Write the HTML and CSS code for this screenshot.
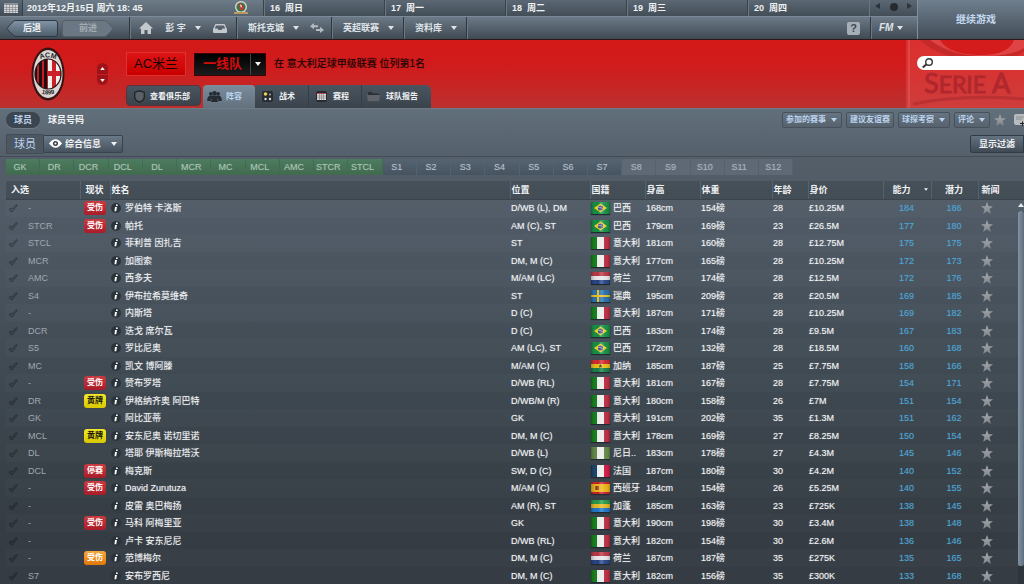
FILE: index.html
```html
<!DOCTYPE html>
<html lang="zh-CN">
<head>
<meta charset="utf-8">
<meta name="viewport" content="width=device-width, initial-scale=1">
<title>AC米兰 - 阵容</title>
<link rel="stylesheet" href="styles.css">
</head>
<body>
<svg class="defs" aria-hidden="true">
  <defs>
    <linearGradient id="gloss" x1="0" x2="1" y1="0" y2="0">
      <stop offset="0" stop-color="#000" stop-opacity=".25"/>
      <stop offset=".35" stop-color="#fff" stop-opacity="0"/>
      <stop offset=".55" stop-color="#fff" stop-opacity=".25"/>
      <stop offset=".75" stop-color="#fff" stop-opacity=".05"/>
      <stop offset="1" stop-color="#000" stop-opacity=".2"/>
    </linearGradient>
    <linearGradient id="star-fill" x1="0" x2="0" y1="0" y2="1">
      <stop offset="0" stop-color="#a8acb0"/><stop offset="1" stop-color="#80858a"/>
    </linearGradient>
  </defs>
  <symbol id="caret" viewBox="0 0 6 4"><path d="M0 0h6L3 4z" fill="currentColor"/></symbol>
  <symbol id="star" viewBox="0 0 12 12"><path d="M6 0l1.500 4.200 4.500.1-3.500 2.800L9.900 12 6 9.300 2.100 12l1.400-4.900L0 4.300l4.500-.1z" fill="url(#star-fill)"/></symbol>
  <symbol id="tick" viewBox="0 0 10 10"><path d="M1 6.200l2-1.200 1.200 1.100L8 1.400l1.300 1L4.400 8.800H3z" fill="#000" fill-opacity=".12" stroke="#000" stroke-opacity=".32" stroke-width=".8"/></symbol>
  <symbol id="info" viewBox="0 0 10 10"><circle cx="5" cy="5" r="5" fill="#2c343b"/><circle cx="5.900" cy="2.200" r=".9" fill="#fff"/><path d="M4 4h2L5.200 8.300H3.500z" fill="#fff"/></symbol>
  <symbol id="flag-it" viewBox="0 0 19 12"><path fill="#0b7a12" d="M0 0h7v12H0z"/><path fill="#e9e9e9" d="M6 0h7v12H6z"/><path fill="#b9253a" d="M13 0h6v12h-6z"/><path fill="url(#gloss)" d="M0 0h19v12H0z"/></symbol>
  <symbol id="flag-fr" viewBox="0 0 19 12"><path fill="#123a63" d="M0 0h7v12H0z"/><path fill="#e9e9e9" d="M6 0h7v12H6z"/><path fill="#d01040" d="M13 0h6v12h-6z"/><path fill="url(#gloss)" d="M0 0h19v12H0z"/></symbol>
  <symbol id="flag-ng" viewBox="0 0 19 12"><path fill="#5d8440" d="M0 0h19v12H0z"/><path fill="#e9e9e9" d="M6 0h7v12H6z"/><path fill="url(#gloss)" d="M0 0h19v12H0z"/></symbol>
  <symbol id="flag-nl" viewBox="0 0 19 12"><path fill="#b5303c" d="M0 0h19v4H0z"/><path fill="#e4e4e8" d="M0 4h19v4H0z"/><path fill="#1e3c80" d="M0 8h19v4H0z"/><path fill="url(#gloss)" d="M0 0h19v12H0z"/></symbol>
  <symbol id="flag-ga" viewBox="0 0 19 12"><path fill="#1e9440" d="M0 0h19v4H0z"/><path fill="#e3b420" d="M0 4h19v4H0z"/><path fill="#1670c4" d="M0 8h19v4H0z"/><path fill="url(#gloss)" d="M0 0h19v12H0z"/></symbol>
  <symbol id="flag-gh" viewBox="0 0 19 12"><path fill="#cc2028" d="M0 0h19v4H0z"/><path fill="#e8bc10" d="M0 4h19v4H0z"/><path fill="#107a40" d="M0 8h19v4H0z"/><path fill="#222" d="M9.500 4l.6 1.400h1.400l-1 .9.400 1.500-1.400-.8-1.400.8.400-1.500-1-.9h1.400z"/><path fill="url(#gloss)" d="M0 0h19v12H0z"/></symbol>
  <symbol id="flag-es" viewBox="0 0 19 12"><path fill="#c01824" d="M0 0h19v12H0z"/><path fill="#ecae10" d="M0 2h19v8H0z"/><path fill="#9a5a28" d="M4 4h4v4H4z"/><path fill="#6e3830" d="M5 4h1v4H5z"/><path fill="url(#gloss)" d="M0 0h19v12H0z"/></symbol>
  <symbol id="flag-se" viewBox="0 0 19 12"><path fill="#1f6aa8" d="M0 0h19v12H0z"/><path fill="#e8bc20" d="M6 0h2v5h11v2H8v5H6V7H0V5h6z"/><path fill="url(#gloss)" d="M0 0h19v12H0z"/></symbol>
  <symbol id="flag-br" viewBox="0 0 19 12"><path fill="#0d8a3c" d="M0 0h19v12H0z"/><path fill="#ecd020" d="M9.500 1.500L16 6l-6.500 4.500L3 6z"/><circle cx="9.500" cy="6" r="2.600" fill="#33408c"/><path d="M7 5.400q2.600-.4 4.800 1.300" stroke="#c8d0e0" stroke-width=".6" fill="none"/><path fill="url(#gloss)" d="M0 0h19v12H0z"/></symbol>
</svg>

<header class="topbar">
  <div class="topbar-main">
    <div class="days">
      <button class="cal" aria-label="日历"><svg viewBox="0 0 14 10" width="14" height="10"><path fill="#d4d6d8" d="M0 0h14v10H0z"/><path fill="#8a9096" d="M0 0h14v2H0z"/><path stroke="#7a8086" d="M0 4.500h14M0 6.500h14M0 8.500h14M2.500 2v8M5.500 2v8M8.500 2v8M11.500 2v8" stroke-width=".6"/></svg></button>
      <div class="today"><time>2012年12月15日 周六 18: 45</time>
        <svg class="mini-crest" viewBox="0 0 14 14" width="14" height="14"><circle cx="7" cy="6" r="6" fill="#d5d8d2"/><circle cx="7" cy="6" r="4.600" fill="#2d7a4c"/><path d="M5 2l3 1 2 3-1 3-3 0-1-3z" fill="#c2392f"/><path d="M6 3l2 2-1 2z" fill="#fff"/><path d="M0 11h14v2H0z" fill="#b79a5c"/></svg></div>
      <div class="day">16 &nbsp;周日</div>
      <div class="day">17 &nbsp;周一</div>
      <div class="day">18 &nbsp;周二</div>
      <div class="day">19 &nbsp;周三</div>
      <div class="day">20 &nbsp;周四</div>
      <div class="pager">
        <button aria-label="前一天"><svg viewBox="0 0 5 6" width="5" height="6"><path d="M5 0v6L0 3z" fill="#2c333a"/></svg></button>
        <button aria-label="今天"><svg viewBox="0 0 8 8" width="8" height="8"><circle cx="4" cy="4" r="4" fill="#262b30"/></svg></button>
        <button aria-label="后一天"><svg viewBox="0 0 5 6" width="5" height="6"><path d="M0 0v6l5-3z" fill="#2c333a"/></svg></button>
      </div>
    </div>
    <nav class="menubar" aria-label="主菜单">
      <div class="history">
        <button class="history-btn"><svg viewBox="0 0 52 17" width="52" height="17"><defs><linearGradient id="bk" x1="0" x2="0" y1="0" y2="1"><stop offset="0" stop-color="#8195a7"/><stop offset="1" stop-color="#4d5c6a"/></linearGradient></defs><path d="M9 .5h40q2.500 0 2.500 2.500v11q0 2.500-2.500 2.500H9Q7 16 1 8.500 7 1 9 .5z" fill="url(#bk)" stroke="#2f3943"/></svg><span>后退</span></button>
        <button class="history-btn history-next" disabled><svg viewBox="0 0 52 17" width="52" height="17"><path d="M43 .5H3Q.5.500.5 3v11q0 2.500 2.500 2.500h40q2-.5 8-8-6-7.500-8-8z" fill="#6b7782" stroke="#56616c"/></svg><span>前进</span></button>
      </div>
      <div class="menu menu-user">
        <button aria-label="主页"><svg viewBox="0 0 14 12" width="14" height="12"><path d="M7 0l7 6.500h-2V12H8.500V8h-3v4H2V6.500H0z" fill="#c3c8cd"/></svg></button>
        <button>彭 宇 <svg class="caret"><use href="#caret"/></svg></button>
        <button aria-label="收件箱"><svg viewBox="0 0 14 9" width="14" height="9"><path d="M2.500 0h9L14 5v3q0 1-1 1H1Q0 9 0 8V5z" fill="#c3c8cd"/><path d="M3.200 1.400h7.600l1.500 3.200H9.500l-1 1.400h-3l-1-1.400H1.700z" fill="#55616c"/></svg></button>
      </div>
      <div class="menu menu-club">
        <button>斯托克城 <svg class="caret"><use href="#caret"/></svg></button>
        <button aria-label="切换"><svg viewBox="0 0 14 10" width="14" height="10"><path d="M4 0v2.200h4v2H4v2L0 3.200zM10 3.800V6H6v2h4v2l4-3z" fill="#b4bac0"/></svg></button>
      </div>
      <div class="menu menu-mid"><button>英超联赛 <svg class="caret"><use href="#caret"/></svg></button></div>
      <div class="menu menu-mid"><button>资料库 <svg class="caret"><use href="#caret"/></svg></button></div>
      <div class="menu menu-fill"><button class="help" aria-label="帮助">?</button></div>
      <div class="menu menu-fm"><button class="fm">FM <svg class="caret"><use href="#caret"/></svg></button></div>
    </nav>
  </div>
  <button class="continue">继续游戏</button>
</header>

<section class="banner">
  <div class="badge-area">
    <svg class="crest" viewBox="0 0 34 54" width="34" height="54" role="img" aria-label="AC米兰队徽">
      <defs><clipPath id="inner"><ellipse cx="17" cy="27" rx="13" ry="15"/></clipPath></defs>
      <ellipse cx="17" cy="27" rx="16.500" ry="26.500" fill="#3a1214"/>
      <ellipse cx="17" cy="27" rx="14.500" ry="24" fill="#d9d6d4"/>
      <g clip-path="url(#inner)">
        <path fill="#c81c24" d="M2 9h30v36H2z"/>
        <path fill="#171113" d="M3 9h3v36H3zM8 9h3v36H8zM13 9h3v36h-3z"/>
        <path fill="#f1eeec" d="M17 9h15v36H17z"/>
        <path fill="#cc2028" d="M21 9h4v36h-4zM17 24h15v5H17z"/>
      </g>
      <ellipse cx="17" cy="27" rx="13" ry="15" fill="none" stroke="#241416" stroke-width="1.200"/>
      <path id="arc-top" d="M6 14Q17 7 28 14" fill="none"/>
      <path id="arc-low" d="M6 45Q17 50 28 45" fill="none"/>
      <text class="crest-text"><textPath href="#arc-top" startOffset="50%" text-anchor="middle">ACM</textPath></text>
      <text class="crest-year"><textPath href="#arc-low" startOffset="50%" text-anchor="middle">1899</textPath></text>
    </svg>
    <div class="stepper">
      <button aria-label="上一队"><svg viewBox="0 0 6 4" width="5" height="3"><path d="M0 4h6L3 0z" fill="#fff"/></svg></button>
      <button aria-label="下一队"><svg viewBox="0 0 6 4" width="5" height="3"><path d="M0 0h6L3 4z" fill="#fff"/></svg></button>
    </div>
  </div>
  <div class="banner-main">
    <div class="title-row">
      <h1 class="club">AC米兰</h1>
      <div class="squad"><button class="squad-name">一线队</button><button class="squad-more" aria-label="选择球队"><svg class="caret"><use href="#caret"/></svg></button></div>
      <p class="standing">在 意大利足球甲级联赛 位列第1名</p>
    </div>
    <nav class="tabs" aria-label="俱乐部">
      <a class="tab tab-club" href="#club"><svg viewBox="0 0 12 14" width="11" height="13"><path d="M6 0l6 2v5q0 5-6 7Q0 12 0 7V2z" fill="#20252a"/><path d="M6 1.500l4.500 1.400V7q0 3.800-4.500 5.300Q1.500 10.800 1.500 7V2.900z" fill="#5a6066"/></svg>查看俱乐部</a>
      <a class="tab tab-on" href="#squad" aria-current="page"><svg viewBox="0 0 16 12" width="15" height="11"><circle cx="4" cy="3" r="2" fill="#262c33"/><circle cx="12" cy="3" r="2" fill="#262c33"/><circle cx="8" cy="2.500" r="2.500" fill="#262c33"/><path d="M0 11q0-5 3-6h10q3 1 3 6h-4l-.5 1h-7L4 11z" fill="#262c33"/><path d="M4.500 11V8M11.500 11V8" stroke="#566470" stroke-width=".8"/></svg>阵容</a>
      <div class="tab-group">
        <a class="tab" href="#tactics"><svg viewBox="0 0 11 11" width="11" height="11"><rect width="11" height="11" rx="2" fill="#272c31"/><circle cx="3.500" cy="3" r="1.800" fill="#e8d44a"/><circle cx="8" cy="3.500" r="1" fill="#aaa"/><circle cx="3.500" cy="8" r="1.200" fill="#ddd"/><circle cx="8" cy="8" r="1.200" fill="#ddd"/></svg>战术</a>
        <a class="tab" href="#schedule"><svg viewBox="0 0 11 11" width="11" height="11"><rect width="11" height="11" rx="2" fill="#272c31"/><path fill="#e2dcdc" d="M1 3h9v6H1z"/><path fill="#b04a50" d="M1 2h9v1H1z"/><path stroke="#666" stroke-width=".5" d="M3.500 3v6M5.500 3v6M7.500 3v6M1 5h9M1 7h9"/></svg>赛程</a>
        <a class="tab tab-report" href="#report"><svg viewBox="0 0 13 11" width="13" height="11"><path d="M1 1h4l1 1.500h6V11H1z" fill="#2a3036"/><path d="M0 4h13l-1 6.500H1z" fill="#5e646a"/></svg>球队报告</a>
      </div>
    </nav>
  </div>
  <div class="league">
    <svg class="league-art" viewBox="0 0 118 68" preserveAspectRatio="none" aria-hidden="true"><path d="M0 0h118v68H0z" fill="#e04a48" opacity=".5"/><path d="M2 0h2v68H2z" fill="#e88" opacity=".25"/><path d="M14 0q20 19 58 20t46-9V0z" fill="#b82424" opacity=".6"/><path d="M24 0q20 15 50 16t44-8V0z" fill="#df4343"/><path d="M34 0q8 14 38 15t36-15z" fill="#d41c1c"/><path d="M7 64q50-10 111-5" stroke="#b22c30" stroke-width="3" fill="none" opacity=".7"/></svg>
    <label class="search"><svg viewBox="0 0 11 10" width="11" height="10"><circle cx="7" cy="4" r="3.300" fill="none" stroke="#333" stroke-width="1.400"/><path d="M4.500 6.300L.8 9.500" stroke="#333" stroke-width="2"/></svg><input type="search" aria-label="搜索"></label>
    <div class="serie"><big>S</big>ERIE<big> A</big></div>
  </div>
</section>

<main class="page">
  <div class="subnav">
    <a class="pill" href="#players">球员</a>
    <a class="sublink" href="#numbers">球员号码</a>
    <div class="actions">
      <button class="action">参加的赛事 <svg class="caret"><use href="#caret"/></svg></button>
      <button class="action">建议友谊赛</button>
      <button class="action">球探考察 <svg class="caret"><use href="#caret"/></svg></button>
      <button class="action">评论 <svg class="caret"><use href="#caret"/></svg></button>
      <button class="icon-btn" aria-label="收藏"><svg width="12" height="12"><use href="#star"/></svg></button>
      <button class="icon-btn icon-note" aria-label="便笺"><svg viewBox="0 0 10 12" width="10" height="12"><path d="M2 0h8v11H2Q0 11 0 9V2Q0 0 2 0z" fill="#b9bcbf"/><path d="M2 3h8M2 5h6" stroke="#8a8e92"/><path d="M6 9.500h4M8.500 7.500V12" stroke="#222"/></svg></button>
    </div>
  </div>
  <div class="viewbar">
    <h2 class="view-title">球员</h2>
    <div class="view-select">
      <svg viewBox="0 0 14 9" width="13" height="9"><path d="M0 4.500Q7-4.500 14 4.500 7 13.500 0 4.500z" fill="#fff"/><circle cx="7" cy="4.500" r="2.700" fill="#39434d"/><circle cx="7" cy="4.500" r="1.100" fill="#fff"/></svg>
      <select aria-label="视图"><option>综合信息</option></select>
      <svg class="caret"><use href="#caret"/></svg>
    </div>
    <button class="filter">显示过滤</button>
  </div>
  <div class="slots" id="slots"></div>
  <div class="roster">
    <table class="players">
      <colgroup><col class="c-pick"><col class="c-status"><col class="c-name"><col class="c-pos"><col class="c-nat"><col class="c-h"><col class="c-w"><col class="c-age"><col class="c-val"><col class="c-ca"><col class="c-pa"><col class="c-news"></colgroup>
      <thead><tr><th>入选</th><th>现状</th><th>姓名</th><th>位置</th><th>国籍</th><th>身高</th><th>体重</th><th>年龄</th><th>身价</th><th class="ability sorted">能力<svg class="caret"><use href="#caret"/></svg></th><th class="ability">潜力</th><th class="news">新闻</th></tr></thead>
      <tbody id="rows"></tbody>
    </table>
    <div class="scroll" aria-hidden="true"><svg viewBox="0 0 6 4" width="6" height="4"><path d="M0 4h6L3 0z" fill="#e8eaec"/></svg><div class="scroll-track"><div class="scroll-thumb"></div></div></div>
  </div>
</main>
<script src="app.js"></script>
</body>
</html>
```
FILE: app.js
```js
const slots = {
  first: 'GK DR DCR DCL DL MCR MC MCL AMC STCR STCL',
  bench: 'S1 S2 S3 S4 S5 S6 S7',
  spare: 'S8 S9 S10 S11 S12'
};

document.getElementById('slots').innerHTML = Object.entries(slots)
  .flatMap(([kind, names]) => names.split(' ').map(n => `<button class="slot slot-${kind}">${n}</button>`))
  .join('');

// status code -> [label, badge colour]
const statuses = {
  inj: ['受伤', 'red'],
  light: ['受伤', 'orange'],
  ban: ['停赛', 'red'],
  card: ['黄牌', 'yellow']
};

// pick | status | name | position | flag | nation | height | weight | age | value | ability | potential
const players = `-|inj|罗伯特 卡洛斯|D/WB (L), DM|br|巴西|168|154|28|£10.25M|184|186
STCR|inj|帕托|AM (C), ST|br|巴西|179|169|23|£26.5M|177|180
STCL||菲利普 因扎吉|ST|it|意大利|181|160|28|£12.75M|175|175
MCR||加图索|DM, M (C)|it|意大利|177|165|28|£10.25M|172|173
AMC||西多夫|M/AM (LC)|nl|荷兰|177|174|28|£12.5M|172|176
S4||伊布拉希莫维奇|ST|se|瑞典|195|209|28|£20.5M|169|185
-||内斯塔|D (C)|it|意大利|187|171|28|£10.25M|169|182
DCR||迭戈 席尔瓦|D (C)|br|巴西|183|174|28|£9.5M|167|183
S5||罗比尼奥|AM (LC), ST|br|巴西|172|132|28|£18.5M|160|168
MC||凯文 博阿滕|M/AM (C)|gh|加纳|185|187|25|£7.75M|158|166
-|inj|赞布罗塔|D/WB (RL)|it|意大利|181|167|28|£7.75M|154|171
DR|card|伊格纳齐奥 阿巴特|D/WB/M (R)|it|意大利|180|158|26|£7M|151|154
GK||阿比亚蒂|GK|it|意大利|191|202|35|£1.3M|151|162
MCL|card|安东尼奥 诺切里诺|DM, M (C)|it|意大利|178|169|27|£8.25M|150|154
DL||塔耶 伊斯梅拉塔沃|D/WB (L)|ng|尼日..|183|178|27|£4.3M|145|146
DCL|ban|梅克斯|SW, D (C)|fr|法国|187|180|30|£4.2M|140|152
-|inj|David Zurutuza|M/AM (C)|es|西班牙|184|154|26|£5.25M|140|155
-||皮雷 奥巴梅扬|AM (R), ST|ga|加蓬|185|163|23|£725K|138|145
-|inj|马科 阿梅里亚|GK|it|意大利|190|198|30|£3.4M|138|148
-||卢卡 安东尼尼|D/WB (RL)|it|意大利|182|154|30|£2.6M|136|146
-|light|范博梅尔|DM, M (C)|nl|荷兰|187|187|35|£275K|135|165
S7||安布罗西尼|DM, M (C)|it|意大利|182|156|35|£300K|133|168`;

document.getElementById('rows').innerHTML = players.split('\n').map(line => {
  const [pick, status, name, pos, flag, nation, h, w, age, value, ca, pa] = line.split('|');
  const [label, colour] = statuses[status] || [];
  const badge = label ? `<span class="status status-${colour}">${label}</span>` : '';
  return `<tr>
    <td class="pick"><span class="cell"><svg width="10" height="10"><use href="#tick"/></svg>${pick}</span></td>
    <td class="state">${badge}</td>
    <td><span class="cell cell-name"><svg width="10" height="10"><use href="#info"/></svg>${name}</span></td>
    <td>${pos}</td>
    <td><span class="cell cell-nation"><svg class="flag" width="19" height="12"><use href="#flag-${flag}"/></svg>${nation}</span></td>
    <td>${h}cm</td><td>${w}磅</td><td>${age}</td><td>${value}</td>
    <td class="ability">${ca}</td><td class="ability">${pa}</td>
    <td class="news"><svg width="12" height="12"><use href="#star"/></svg></td>
  </tr>`;
}).join('');
```
FILE: styles.css
```css
* { box-sizing: border-box; }
html { height: 100%; background: #343b42; }
body {
  margin: 0;
  min-height: 100%;
  font: 9px/12px "Liberation Sans", "Noto Sans CJK SC", sans-serif;
  color: #f0f2f4;
  overflow: hidden;
}
button, input, select { font: inherit; color: inherit; border: 0; padding: 0; margin: 0; background: none; }
a { color: inherit; text-decoration: none; }
h1, h2, p { margin: 0; font-weight: 400; }
svg { display: block; flex: none; }
.defs { position: absolute; width: 0; height: 0; }
.caret { width: 6px; height: 4px; }

/* Top bar */
.topbar { display: flex; height: 40px; border-bottom: 1px solid #30161a; }
.topbar-main { flex: 1; display: flex; flex-direction: column; }
.days { display: flex; height: 16px; background: linear-gradient(#5b6874, #424d57); font-weight: 700; }
.cal { width: 23px; display: flex; align-items: center; justify-content: center; border-right: 1px solid #35404a; }
.today {
  width: 241px; padding: 0 16px 0 4px;
  display: flex; align-items: center; justify-content: space-between;
  background: linear-gradient(#6d7b88, #56636f);
}
.day { flex: 1; padding-left: 5px; line-height: 16px; border-left: 1px solid #6a7682; box-shadow: -1px 0 #39434c; }
.pager { width: 48px; display: flex; align-items: flex-start; justify-content: space-between; padding: 3px 5px 0; border-left: 1px solid #6a7682; }
.menubar { flex: 1; display: flex; background: linear-gradient(#6c7a87, #3f4952); border-top: 1px solid #7b8998; }
.history { width: 129px; display: flex; align-items: center; gap: 4px; padding-left: 6px; }
.history-btn { display: grid; align-items: center; justify-items: center; font-weight: 700; }
.history-btn > * { grid-area: 1 / 1; }
.history-next { color: #a3acb5; }
.menu { display: flex; align-items: center; border-left: 1px solid #2e3740; box-shadow: inset 1px 0 #6c7986; font-weight: 700; color: #dfe3e7; }
.menu button { display: flex; align-items: center; gap: 9px; }
.menu-user { width: 107px; padding: 0 9px; justify-content: space-between; }
.menu-club { width: 95px; padding: 0 7px 0 11px; justify-content: space-between; }
.menu-mid { padding: 0 9px 0 11px; }
.menu-fill { flex: 1; justify-content: flex-end; padding-right: 10px; }
.menu .help { width: 13px; height: 13px; justify-content: center; border-radius: 2px; background: #a5afb8; color: #3c4650; font-size: 11px; }
.menu-fm { width: 47px; padding-left: 8px; }
.menu .fm { gap: 4px; font-style: italic; font-weight: 700; font-size: 10px; }
.continue {
  width: 107px; padding-left: 10px; font-size: 10px; font-weight: 700; color: #c4d8f0;
  background: linear-gradient(#6f7f8e, #424c56); border-left: 1px solid #8290a0;
}

/* Club banner */
.banner { display: flex; height: 68px; background: linear-gradient(#d41818, #d01c1c 40%, #bb302f); }
.badge-area { width: 126px; display: flex; align-items: center; padding: 0 18px 0 31px; justify-content: space-between; }
.crest-text { font-size: 7px; font-weight: 700; fill: #222; }
.crest-year { font-size: 6px; font-weight: 700; fill: #222; }
.stepper { width: 11px; border-radius: 6px; background: #a01318; overflow: hidden; }
.stepper button { width: 11px; height: 11px; display: flex; align-items: center; justify-content: center; }
.stepper button + button { border-top: 1px solid #c02024; }
.banner-main { flex: 1; display: flex; flex-direction: column; justify-content: space-between; padding-top: 12px; }
.title-row { display: flex; align-items: center; gap: 8px; }
.club { width: 60px; line-height: 22px; font-size: 13px; text-align: center; color: #140404; background: linear-gradient(#dc1414, #c80000); border: 1px solid #e03030; }
.squad { display: flex; height: 23px; background: linear-gradient(#000, #1c1c1c); border: 1px solid #3a0508; }
.squad-name { width: 55px; font-size: 13px; font-weight: 700; color: #d40b0b; }
.squad-more { width: 15px; display: flex; align-items: center; justify-content: center; border-left: 1px solid #444; }
.standing { font-size: 10px; color: #1c0506; text-shadow: 0 0 1px rgba(28, 5, 6, .5); }
.tabs { display: flex; align-items: flex-end; height: 23px; font-size: 8px; font-weight: 700; }
.tab { display: flex; align-items: center; gap: 6px; padding: 0 7px; }
.tab-club { align-self: flex-start; width: 75px; height: 21px; margin-right: 2px; border-radius: 4px; background: linear-gradient(#4a5560, #3a434c); border: 1px solid #59333a; gap: 5px; padding-top: 2px; }
.tab-on { width: 52px; height: 23px; padding: 0 4px; gap: 4px; border-radius: 4px 4px 0 0; background: linear-gradient(#7b8c9c, #63717e); color: #bcd4ee; }
.tab-group { display: flex; height: 23px; background: linear-gradient(#4a5560, #3a434c); border-radius: 0 5px 0 0; overflow: hidden; }
.tab-group .tab { width: 53px; }
.tab-group .tab + .tab { border-left: 1px solid #353e46; }
.tab-group .tab-report { width: 70px; padding: 0 5px; }
.league { position: relative; width: 118px; display: flex; flex-direction: column; padding: 16px 0 0 11px; overflow: hidden; }
.league-art { position: absolute; inset: 0; width: 100%; height: 100%; }
.search { position: relative; display: flex; align-items: center; gap: 4px; height: 14px; padding-left: 5px; background: #fff; border-radius: 7px 0 0 7px; }
.search input { flex: 1; min-width: 0; outline: 0; color: #222; }
.serie { position: relative; padding-left: 7px; font: 23px/26px Lato, sans-serif; color: #b0282e; white-space: nowrap; -webkit-text-stroke: 1px #b0282e; }
.serie big { font-size: 27px; }

/* Page body */
.page { position: relative; background: linear-gradient(#62707c, #535e69 52px, #4f5a66 110px, #3e4850 280px, #353c43 420px); border-top: 1px solid #6e7a86; }
.subnav { display: flex; align-items: center; height: 21px; padding-left: 6px; font-weight: 700; gap: 8px; }
.pill { width: 34px; line-height: 16px; text-align: center; border-radius: 8px; background: #3b4550; color: #bcd2ec; box-shadow: 0 1px #707c88; }
.actions { margin-left: auto; display: flex; align-items: center; gap: 4px; }
.action { display: flex; align-items: center; gap: 5px; height: 16px; padding: 0 3px; font-size: 8px; font-weight: 700; color: #bcd2ec; background: linear-gradient(#667481, #56626e); border: 1px solid #46515c; border-radius: 2px; }
.action:has(.caret) { padding-right: 4px; }
.icon-btn { display: flex; }
.icon-note { margin-left: 4px; }
.viewbar { display: flex; align-items: center; height: 27px; padding: 1px 0 0 6px; border-bottom: 1px solid #434d57; }
.view-title { width: 37px; line-height: 18px; font-size: 11px; text-align: center; color: #bcd4f0; background: #4c5762; border: 1px solid #434d57; border-right: 0; }
.view-select { display: flex; align-items: center; gap: 3px; width: 80px; height: 18px; padding: 0 5px; background: linear-gradient(#6b7a88, #46525e); border: 1px solid #39434d; border-radius: 0 2px 2px 0; font-weight: 700; }
.view-select select { flex: 1; min-width: 0; appearance: none; outline: 0; }
.filter { margin-left: auto; width: 54px; height: 18px; font-weight: 700; background: linear-gradient(#64727f, #3f4a55); border: 1px solid #323b44; border-radius: 2px 0 0 2px; }
.slots { display: grid; grid-template-columns: repeat(23, 34fr) 229fr; margin: 2px 0 6px 6px; height: 16px; }
.slot { text-align: center; padding-right: 5px; color: #b4bec6; border-right: 1px solid #55626e; text-shadow: 0 0 1px rgba(200, 215, 225, .4); }
.slot-first { background: linear-gradient(#4d7c60, #416a4e); color: #a9c3b2; border-color: #426b52; }
.slot-bench { background: linear-gradient(#566371, #465360); }
.slot-spare { background: #5e6975; color: #a7b0b9; }

/* Player table */
.roster { position: relative; padding-left: 6px; }
.players { width: 100%; table-layout: fixed; border-collapse: collapse; text-shadow: 0 0 1px rgba(255, 255, 255, .5); }
.c-pick { width: 74px; } .c-status { width: 30px; } .c-pos { width: 80px; } .c-nat { width: 55px; }
.c-h { width: 55px; } .c-w { width: 72px; } .c-age { width: 36px; } .c-val { width: 75px; }
.c-ca { width: 48px; } .c-pa { width: 47px; } .c-news { width: 46px; }
.players th, .players td { padding: 0 0 0 1px; text-align: left; white-space: nowrap; line-height: 12px; }
.players th { height: 18px; background: linear-gradient(#465059, #434d56); border-left: 1px solid #56616b; border-bottom: 1px solid #3b444d; text-shadow: none; }
.players th:first-child { padding-left: 5px; border-left: 0; }
.players th:nth-child(2) { padding-left: 5px; }
.players tr:nth-child(odd) td { height: 18px; background: rgba(255, 255, 255, .02); }
.players tr:nth-child(even) td { height: 17px; }
.cell { display: flex; align-items: center; }
.pick .cell { gap: 10px; padding-left: 1px; color: #a0a8b0; text-shadow: none; }
.cell-name { gap: 4px; }
.cell-nation { gap: 3px; }
.flag { box-shadow: 0 1px 1px #222a31; }
.players td.state { padding-left: 4px; }
.status { display: block; width: 22px; border-radius: 3px; text-align: center; font-size: 8px; line-height: 14px; font-weight: 700; text-shadow: none; }
.status-red { background: linear-gradient(#cc3a40, #a81c28); color: #fff; }
.status-yellow { background: linear-gradient(#f4e82c, #d8c800); color: #16160a; }
.status-orange { background: linear-gradient(#f4a83c, #e07808); color: #fff; }
.players .ability { text-align: center; padding-right: 2px; }
.players td.ability { color: #4fa3d0; text-shadow: 0 0 1px rgba(79, 163, 208, .5); }
.players th.sorted { padding-left: 9px; text-align: left; }
.sorted .caret { display: inline-block; width: 4px; height: 3px; margin: 0 0 2px 13px; }
.players .news { padding-left: 3px; }
.scroll { position: absolute; top: 22px; right: 0; bottom: 0; width: 6px; }
.scroll-track { margin-top: 4px; height: 374px; background: #2e363d; }
.scroll-thumb { height: 95%; background: linear-gradient(90deg, #8292a2, #5f6e7c); border-radius: 2px; }
```
